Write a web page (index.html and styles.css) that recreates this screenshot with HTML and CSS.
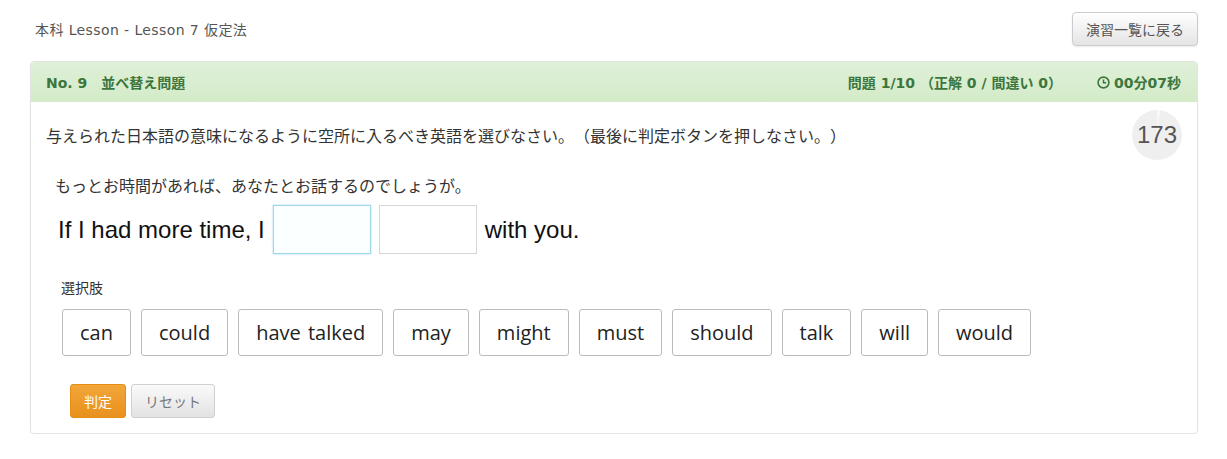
FILE: index.html
```html
<!DOCTYPE html>
<html lang="ja">
<head>
    <meta charset="UTF-8">
    <title>本科 Lesson - Lesson 7 仮定法</title>
    <link rel="stylesheet" href="styles.css">
</head>
<body>
    <div class="page">
        <div class="top-bar">
            <div class="crumb">本科 Lesson - Lesson 7 仮定法</div>
            <button class="btn-back">演習一覧に戻る</button>
        </div>

        <div class="panel">
            <div class="panel-head">
                <div class="q-title">No. 9　並べ替え問題</div>
                <div class="q-stats">
                    <span>問題 1/10 （正解 0 / 間違い 0）</span>
                    <span class="timer">
                        <svg class="clock" width="13" height="13" viewBox="0 0 13 13">
                            <circle cx="6.5" cy="6.5" r="5.4" fill="none" stroke="#3c763d" stroke-width="1.6"/>
                            <path d="M6.5 3.4 V6.8 H9.2" fill="none" stroke="#3c763d" stroke-width="1.5"/>
                        </svg>
                        00分07秒
                    </span>
                </div>
            </div>

            <div class="panel-body">
                <div class="prompt-row">
                    <div class="prompt">与えられた日本語の意味になるように空所に入るべき英語を選びなさい。（最後に判定ボタンを押しなさい。）</div>
                    <div class="countdown">173</div>
                </div>

                <div class="jp">もっとお時間があれば、あなたとお話するのでしょうが。</div>

                <div class="sentence">
                    <span>If I had more time, I</span>
                    <span class="blank active"></span>
                    <span class="blank"></span>
                    <span>with you.</span>
                </div>

                <div class="label">選択肢</div>
                <div class="choices">
                    <button class="choice">can</button>
                    <button class="choice">could</button>
                    <button class="choice">have talked</button>
                    <button class="choice">may</button>
                    <button class="choice">might</button>
                    <button class="choice">must</button>
                    <button class="choice">should</button>
                    <button class="choice">talk</button>
                    <button class="choice">will</button>
                    <button class="choice">would</button>
                </div>

                <div class="actions">
                    <button class="btn-judge">判定</button>
                    <button class="btn-reset">リセット</button>
                </div>
            </div>
        </div>
    </div>
</body>
</html>
```

FILE: styles.css
```css
body {
    margin: 0;
    background: #fff;
    color: #333;
    font-family: "DejaVu Sans", "Noto Sans CJK JP", sans-serif;
    text-spacing-trim: space-all;
}
.page {
    padding: 12px 29px 0 30px;
}
.top-bar {
    display: flex;
    justify-content: space-between;
    align-items: center;
    height: 33px;
}
.crumb {
    padding-left: 5px;
    font-size: 14px;
    letter-spacing: 0.4px;
    color: #555;
}
.btn-back {
    height: 34px;
    padding: 0 13px;
    font-family: "Noto Sans CJK JP", sans-serif;
    font-size: 14px;
    color: #555;
    background: linear-gradient(#fff, #e4e4e4);
    border: 1px solid #ccc;
    border-radius: 4px;
    box-shadow: 0 1px 2px rgba(0, 0, 0, 0.08);
}
.panel {
    margin-top: 16px;
    border: 1px solid #e3e3e3;
    border-radius: 4px;
    box-shadow: 0 1px 2px rgba(0, 0, 0, 0.05);
    overflow: hidden;
}
.panel-head {
    display: flex;
    justify-content: space-between;
    align-items: center;
    height: 40px;
    padding: 0 16px 0 15px;
    background: linear-gradient(#dff0d8, #d3ebc8);
    color: #3c763d;
    font-size: 14px;
    font-weight: bold;
}
.q-stats {
    display: flex;
    align-items: center;
    gap: 35px;
}
.timer {
    display: flex;
    align-items: center;
    gap: 4px;
}
.panel-body {
    padding: 8px 15px 15px 15px;
}
.prompt-row {
    display: flex;
    justify-content: space-between;
    align-items: center;
    height: 50px;
}
.prompt {
    font-size: 16px;
    font-family: "Noto Sans CJK JP", sans-serif;
    color: #333;
}
.countdown {
    width: 50px;
    height: 50px;
    border-radius: 50%;
    background: conic-gradient(#f8f8f8 0 2%, #efefef 2%);
    display: flex;
    align-items: center;
    justify-content: center;
    font-family: "Liberation Sans", Arial, sans-serif;
    font-size: 24px;
    color: #555;
}
.jp {
    margin: 17px 0 0 9px;
    font-family: "Noto Sans CJK JP", sans-serif;
    font-size: 16px;
    line-height: 16px;
    color: #333;
}
.sentence {
    display: flex;
    align-items: center;
    gap: 8px;
    margin: 12px 0 0 12px;
    font-family: "Liberation Sans", Arial, sans-serif;
    font-size: 24px;
    color: #111;
}
.sentence .blank {
    width: 96px;
    height: 47px;
    border: 1px solid #d6d6d6;
}
.sentence .blank.active {
    border-color: #9fd6e8;
    box-shadow: 0 0 2px rgba(102, 190, 233, 0.6);
    background: #fcffff;
}
.label {
    margin: 23px 0 0 15px;
    font-family: "Noto Sans CJK JP", sans-serif;
    font-size: 14px;
    line-height: 20px;
    color: #333;
}
.choices {
    display: flex;
    gap: 10px;
    margin: 12px 0 0 16px;
}
.choice {
    height: 47px;
    padding: 0 17px;
    font-family: "Open Sans", "Noto Sans", sans-serif;
    font-size: 20px;
    word-spacing: 2px;
    color: #222;
    background: #fff;
    border: 1px solid #bbb;
    border-radius: 3px;
}
.actions {
    display: flex;
    gap: 5px;
    margin: 28px 0 0 24px;
}
.btn-judge {
    height: 34px;
    padding: 0 13px;
    font-family: "Noto Sans CJK JP", sans-serif;
    font-size: 14px;
    color: #fff;
    background: linear-gradient(#f3a63b, #e8911d);
    border: 1px solid #e38d13;
    border-radius: 3px;
}
.btn-reset {
    height: 34px;
    padding: 0 13px;
    font-family: "Noto Sans CJK JP", sans-serif;
    font-size: 14px;
    color: #777;
    background: linear-gradient(#fafafa, #e2e2e2);
    border: 1px solid #d0d0d0;
    border-radius: 3px;
}
```
